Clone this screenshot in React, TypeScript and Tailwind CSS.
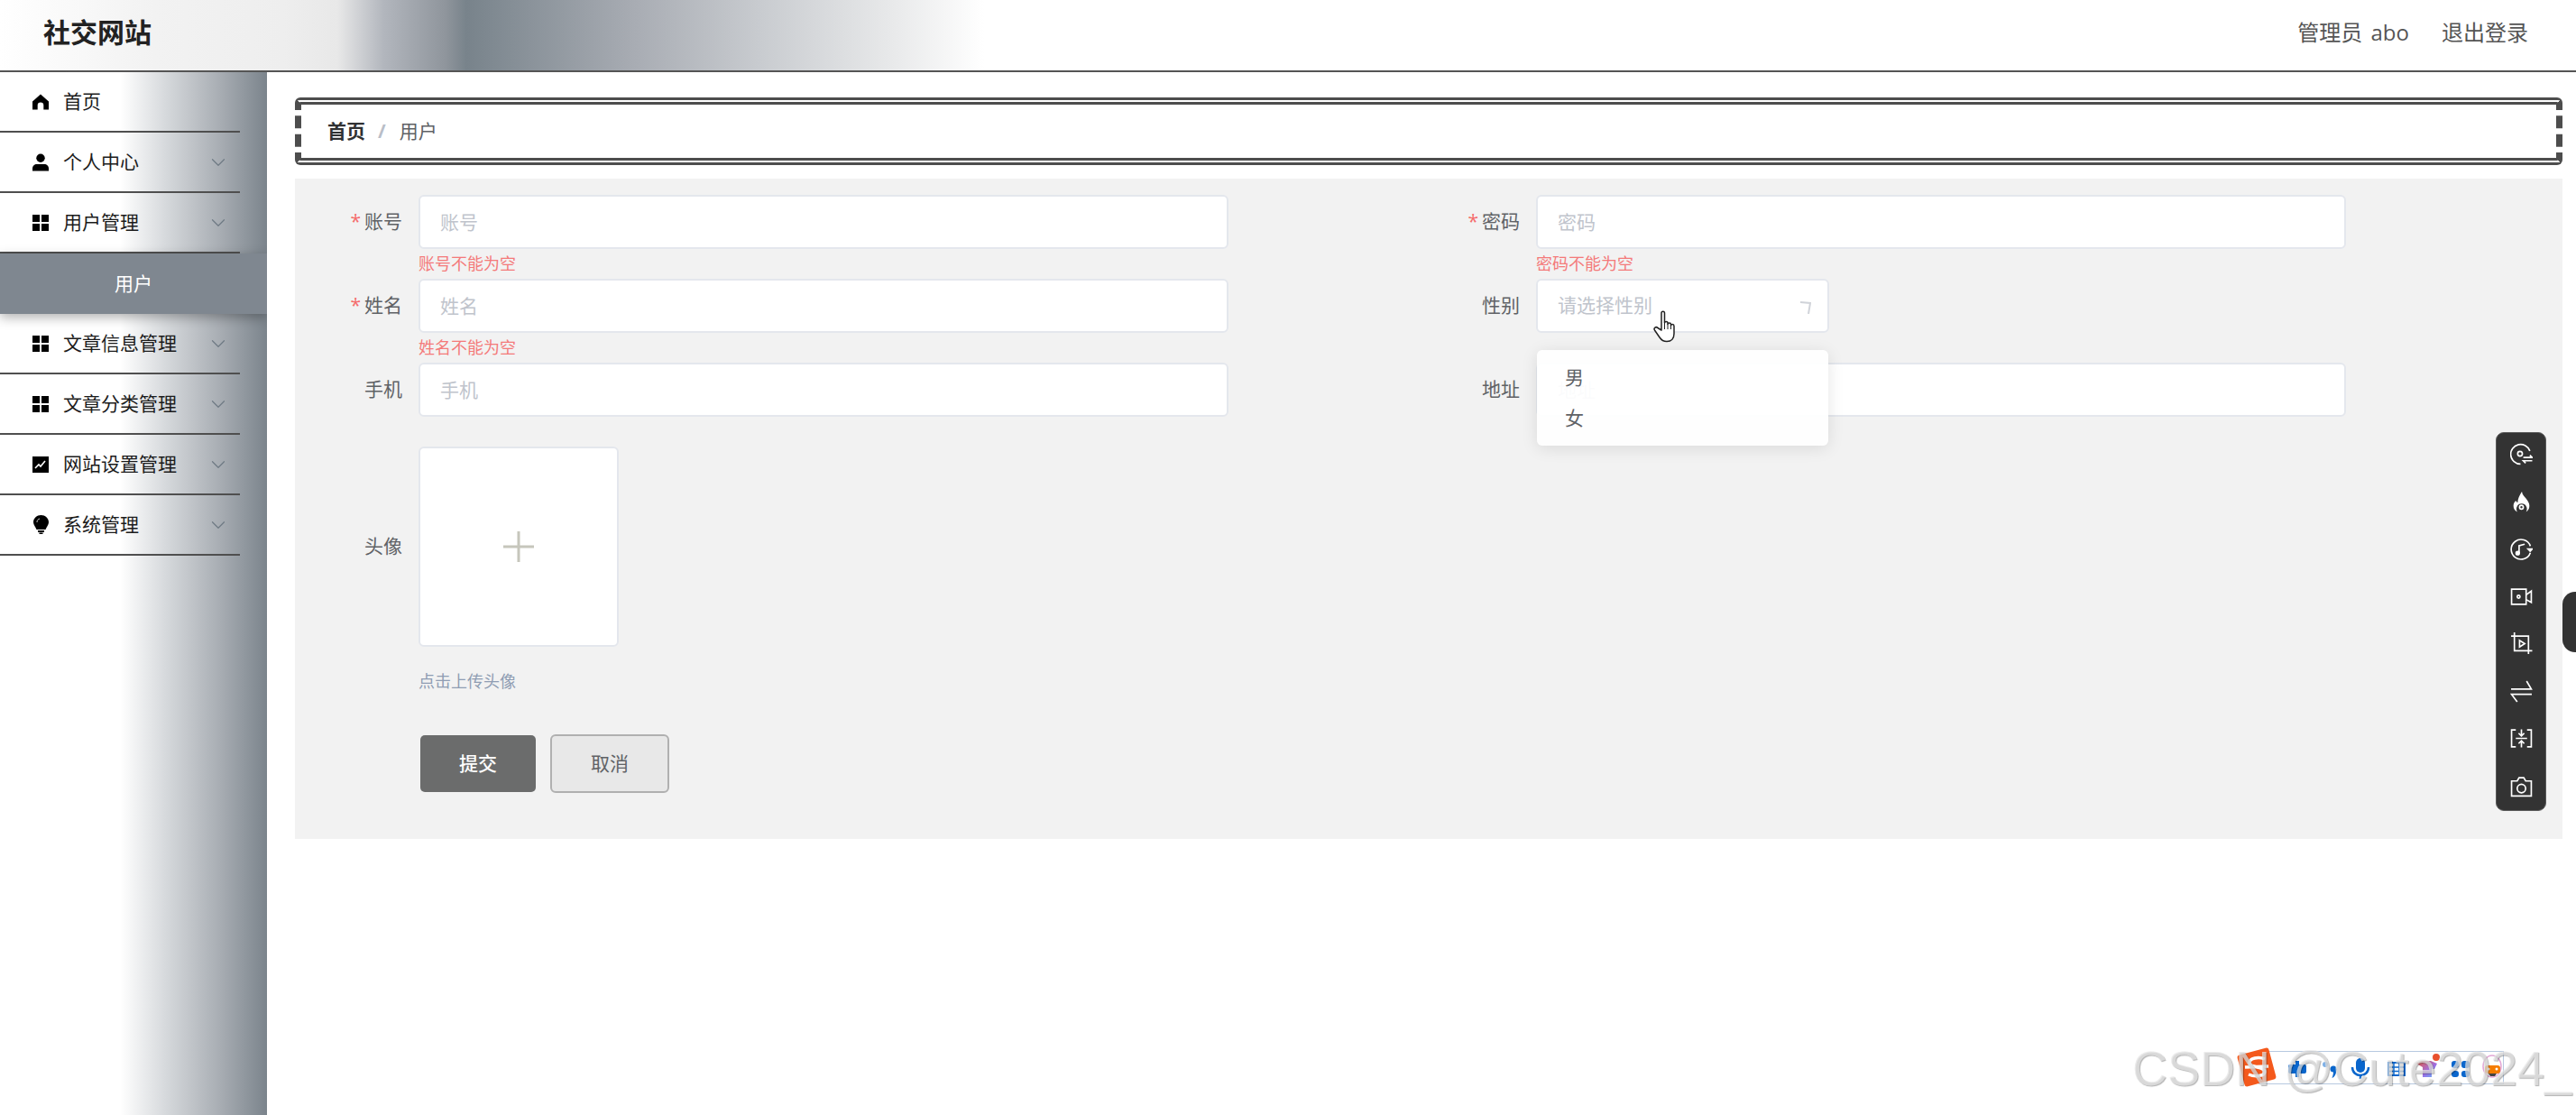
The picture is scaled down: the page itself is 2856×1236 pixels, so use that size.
import { ChevronDown } from 'lucide-react'
import type { ReactNode } from 'react'

function HomeIcon() {
  return (
    <svg viewBox="0 0 19 18" className="w-[19px] h-[18px]" fill="#000">
      <path d="M9.500 0L19 8.500V18h-6v-5a3.500 3.500 0 0 0-7 0v5H0V8.500z" />
    </svg>
  )
}

function PersonIcon() {
  return (
    <svg viewBox="0 0 19 20" className="w-[19px] h-[20px]" fill="#000">
      <circle cx="9.500" cy="5" r="5" />
      <path d="M0 20v-3c0-3 2.500-5 5-5h9c2.500 0 5 2 5 5v3z" />
    </svg>
  )
}

function GridIcon() {
  return (
    <svg viewBox="0 0 18 18" className="w-[18px] h-[18px]" fill="#000">
      <rect x="0" y="0" width="8" height="8" />
      <rect x="10" y="0" width="8" height="8" />
      <rect x="0" y="10" width="8" height="8" />
      <rect x="10" y="10" width="8" height="8" />
    </svg>
  )
}

function ChartIcon() {
  return (
    <svg viewBox="0 0 18 18" className="w-[18px] h-[18px]">
      <rect width="18" height="18" fill="#000" />
      <path d="M3 13l4-4 2 2 5-6" fill="none" stroke="#fff" strokeWidth="1.600" />
    </svg>
  )
}

function BulbIcon() {
  return (
    <svg viewBox="0 0 17 21" className="w-[17px] h-[21px]" fill="#000">
      <path d="M8.500 0C13 0 17 3.500 17 8c0 3-2.500 5-3.500 8h-10C2.500 13 0 11 0 8 0 3.500 4 0 8.500 0z" />
      <rect x="5" y="17" width="7" height="2" />
      <rect x="6.500" y="19.500" width="4" height="1.500" />
      <path d="M4 8c0-2 1-3.500 3-4" fill="none" stroke="#fff" strokeWidth="0.800" />
    </svg>
  )
}

const menus: { label: string; icon: ReactNode; arrow?: boolean; active?: boolean }[] = [
  { label: '首页', icon: <HomeIcon /> },
  { label: '个人中心', icon: <PersonIcon />, arrow: true },
  { label: '用户管理', icon: <GridIcon />, arrow: true },
  { label: '用户', icon: null, active: true },
  { label: '文章信息管理', icon: <GridIcon />, arrow: true },
  { label: '文章分类管理', icon: <GridIcon />, arrow: true },
  { label: '网站设置管理', icon: <ChartIcon />, arrow: true },
  { label: '系统管理', icon: <BulbIcon />, arrow: true },
]

function MenuItem({ label, icon, arrow, active }: (typeof menus)[number]) {
  if (active) {
    return (
      <div className="relative h-[67px] bg-[#7f8790] text-white text-[21px] flex items-center justify-center shadow-[0_4px_12px_rgba(0,0,0,0.3)]">
        {label}
      </div>
    )
  }
  return (
    <div className="h-[67px] w-[266px] border-b-2 border-[#4f4f4f] flex items-center pl-[36px] pr-[11px] text-[21px] text-[#1c1c1c]">
      <span className="w-[18px] flex justify-center">{icon}</span>
      <span className="ml-[16px] flex-1">{label}</span>
      {arrow && <ChevronDown className="w-[26px] h-[26px] text-[#6f7a84]" strokeWidth={1.1} />}
    </div>
  )
}

function Field({
  label,
  required,
  error,
  placeholder,
  narrow,
}: {
  label: string
  required?: boolean
  error?: string
  placeholder: string
  narrow?: boolean
}) {
  return (
    <div className="flex">
      <div className="w-[119px] h-[60px] mr-[18px] flex items-center justify-end text-[21px] text-[#606266]">
        {required && <span className="text-[#f56c6c] mr-[4px]">*</span>}
        {label}
      </div>
      <div>
        {narrow ? (
          <div className="relative w-[325px] h-[60px] bg-white border-2 border-[#e4e7ed] rounded-[6px] pl-[22px] flex items-center text-[21px] text-[#c0c4cc]">
            {placeholder}
            <svg viewBox="0 0 12 14" className="absolute right-[18px] top-[23px] w-[12px] h-[14px]" fill="none" stroke="#d0d3d9" strokeWidth="2">
              <path d="M0 1l11 1-2 12" />
            </svg>
          </div>
        ) : (
          <input
            placeholder={placeholder}
            className="block w-[898px] h-[60px] bg-white border-2 border-[#e4e7ed] rounded-[6px] pl-[22px] text-[21px] outline-none placeholder:text-[#c0c4cc]"
          />
        )}
        <div className="h-[33px] leading-[33px] text-[18px] text-[#f47a7a]">{error}</div>
      </div>
    </div>
  )
}

const toolIcons: ReactNode[] = [
  <>
    <path d="M21 8.500A10.500 10.500 0 1 0 11 22.500" />
    <circle cx="10.500" cy="11.500" r="2.500" />
    <path d="M14 15.500h9.500l-2.500-2.500M23.500 19H14l2.500 2.500" />
  </>,
  <>
    <path
      fill="#fff"
      stroke="none"
      d="M12.500 1c.5 3.500 2.500 5 4.500 7.500 2 2.500 3.500 5 3.500 7.500 0 3-1.500 5-3.500 6.500 1-2 1-4 .5-5a5.500 5.500 0 0 0-10.500 0c-.5 1-.5 3 .5 5C5 21 3.500 19 3.500 16c0-2.500 1-4 2.500-5.500.5 1 1 1.500 2 2C8 9 10 4.500 12.500 1z"
    />
    <circle cx="12" cy="17.500" r="2" />
  </>,
  <>
    <path d="M21.500 9A10.500 10.500 0 1 0 21.500 16" />
    <path d="M9.500 16.500V8.500l6-1.500" />
    <circle cx="8" cy="16.500" r="1.700" fill="#fff" />
    <path d="M19 12h4.500l-2.200 2.400z" fill="#fff" />
  </>,
  <>
    <path d="M1.500 4h15.500v16H1.500z" />
    <path d="M17 10l5.500-4v12L17 15" />
    <circle cx="9" cy="12" r="1.500" />
  </>,
  <>
    <path d="M4.500 0v19.500H23.500" />
    <path d="M1 4h18.500v19" />
    <path d="M10 8.500l5.500 3.500-5.500 3.500z" />
  </>,
  <>
    <path d="M1 9.500h21.500L17.500 1" />
    <path d="M23 15H1.500l6 8" />
  </>,
  <>
    <path d="M6 3H1.500v18H6M18 3h4.500v18H18" />
    <path d="M6 12h12M12 2.500v6.500M9 6.500L12 9.500l3-3M12 21.500V15M9 17.500l3-3 3 3" />
  </>,
  <>
    <path d="M1.500 6.500h6l2-3.500h5l2 3.500h6v16h-21z" />
    <circle cx="12" cy="14.500" r="4.500" />
  </>,
]

function SideToolbar() {
  return (
    <div className="absolute left-[2767px] top-[479px] w-[56px] h-[420px] bg-[#333] border border-[#5a5a5a] rounded-[9px] flex flex-col items-center justify-between pt-[11px] pb-[14px]">
      {toolIcons.map((paths, i) => (
        <svg key={i} viewBox="0 0 24 24" className="w-[25px] h-[25px]" fill="none" stroke="#ffffff" strokeWidth="1.600">
          {paths}
        </svg>
      ))}
    </div>
  )
}

function HandCursor() {
  return (
    <svg viewBox="0 0 26 36" className="absolute left-[1833px] top-[344px] w-[26px] h-[36px]" fill="#fff" stroke="#222" strokeWidth="1.500" strokeLinejoin="round">
      <path d="M9 3c0-2.500 3.500-2.500 3.500 0v11c0-2 3.500-2 3.500 0v1.500c0-2 3.500-2 3.500 0V17c0-2 3.500-2 3.500 .5V26c0 5-3 8.500-8 8.500-4 0-6-1.500-8-4.500l-5.500-8c-1.500-2.500 1.500-4.500 3.500-2.500L9 22z" />
      <path d="M12.500 14v7M16 15.500V21M19.500 17v4" fill="none" strokeWidth="1" />
    </svg>
  )
}

function ImeBar() {
  return (
    <div className="absolute left-[2490px] top-[1159px] w-[286px] h-[44px]">
      <div className="absolute left-[14px] top-[6px] right-0 bottom-[1px] border border-[#b7c9e0]" />
      <svg viewBox="0 0 286 44" className="absolute left-0 top-0 w-[286px] h-[44px]" fill="#0a66cc">
        <rect x="47" y="21" width="20" height="10" rx="2" />
        <rect x="55" y="17" width="4" height="18" />
        <circle cx="88" cy="21" r="3" fill="#7fb0e6" />
        <circle cx="97" cy="26" r="3.500" />
        <path d="M97 26h3.500c0 5-2 9-5 10 1-3 1.500-5 1.500-7z" />
        <rect x="122" y="14" width="10" height="16" rx="5" />
        <path d="M118 24c0 12 18 12 18 0M127 33v4" fill="none" stroke="#0a66cc" strokeWidth="2.500" />
        <path d="M158 19h18v14h-18z" fill="none" stroke="#0a66cc" strokeWidth="2" />
        <path d="M158 24h18M158 28.500h18M164 19v14M170 19v14" stroke="#0a66cc" strokeWidth="1.500" />
        <path d="M189 20l6-3h10l7 3-3 6h-3v9h-10V24z" fill="url(#shirt)" />
        <defs>
          <linearGradient id="shirt" x1="0" y1="0" x2="1" y2="1">
            <stop offset="0" stopColor="#ee5a3a" />
            <stop offset="0.6" stopColor="#9b6fe8" />
            <stop offset="1" stopColor="#63b8f5" />
          </linearGradient>
        </defs>
        <circle cx="211" cy="13" r="4" fill="#e8502e" />
        <rect x="228" y="17" width="8" height="8" rx="3" />
        <rect x="239" y="17" width="9" height="8" rx="3" />
        <rect x="228" y="28" width="8" height="7" rx="3" />
        <rect x="239" y="28" width="9" height="7" rx="3" />
        <ellipse cx="273" cy="23" rx="10" ry="12" fill="#fff" stroke="#e3a6d6" strokeWidth="1.500" />
        <rect x="265" y="22" width="17" height="9" rx="3" fill="#f57c00" />
        <circle cx="269" cy="26" r="1.500" fill="#fff" />
        <circle cx="278" cy="26" r="1.500" fill="#fff" />
        <path d="M269 31h9l-2 3h-5z" fill="#444" />
      </svg>
      <svg viewBox="0 0 46 48" className="absolute left-[-11px] top-0 w-[46px] h-[48px]">
        <rect x="5" y="6" width="36" height="36" rx="3" fill="#f4591c" transform="rotate(-15 23 24)" />
        <path d="M32 15c-7-3-17-1-17 4 0 6 17 4 17 10 0 5-11 6-18 3M10 24l26-1" fill="none" stroke="#fff" strokeWidth="3.500" />
      </svg>
    </div>
  )
}

export default function App() {
  return (
    <div className="relative w-[2856px] h-[1236px] overflow-hidden bg-white font-['Open_Sans','Noto_Sans_CJK_SC',sans-serif]">
      <header className="h-[80px] border-b-2 border-[#555] flex items-center justify-between pl-[48px] pr-[53px] pb-[7px] bg-[linear-gradient(90deg,#fff_0%,#f2f2f2_6%,#eeeeee_11%,#e8e8e8_13.100%,#b2b6bd_14.900%,#8f959c_17.300%,#78838b_18.100%,#a8acb3_24.600%,#c9ccd0_29.600%,#e8e9ea_34.600%,#ffffff_38.200%)]">
        <div className="text-[30px] font-bold text-[#222]">社交网站</div>
        <div className="flex gap-[36px] text-[24px] text-[#555]">
          <span className="[word-spacing:3px]">管理员 abo</span>
          <span>退出登录</span>
        </div>
      </header>
      <div className="flex h-[1156px]">
        <aside className="w-[296px] shrink-0 overflow-hidden bg-[linear-gradient(90deg,#fff_45%,#d6d9dc_62%,#a9aeb4_82%,#7b848c_100%)]">
          {menus.map((m) => (
            <MenuItem key={m.label} {...m} />
          ))}
        </aside>
        <main className="flex-1 pt-[28px] pl-[31px] pr-[15px]">
          <div className="h-[75px] bg-white border-[#4d4d4d] rounded-[6px] [border-width:8px_7px] [border-style:double_dashed] flex items-center pl-[29px] text-[21px] gap-[14px]">
            <span className="font-bold text-[#303133]">首页</span>
            <span className="text-[#b9bec8] font-bold">/</span>
            <span className="text-[#606266] ml-[1px]">用户</span>
          </div>
          <div className="mt-[15px] h-[732px] bg-[#f2f2f2] pt-[18px]">
            <div className="grid grid-cols-[1239px_1fr]">
              <Field label="账号" required placeholder="账号" error="账号不能为空" />
              <Field label="密码" required placeholder="密码" error="密码不能为空" />
              <Field label="姓名" required placeholder="姓名" error="姓名不能为空" />
              <Field label="性别" placeholder="请选择性别" narrow />
              <Field label="手机" placeholder="手机" />
              <Field label="地址" placeholder="地址" />
            </div>
            <div className="flex">
              <div className="w-[119px] h-[222px] mr-[18px] flex items-center justify-end text-[21px] text-[#606266]">头像</div>
              <div>
                <div className="w-[222px] h-[222px] bg-white border-2 border-[#e4e7ed] rounded-[6px] flex items-center justify-center">
                  <svg viewBox="0 0 34 34" className="w-[34px] h-[34px]" stroke="#c6c6bc" strokeWidth="3">
                    <path d="M17 0v34M0 17h34" />
                  </svg>
                </div>
                <div className="mt-[26px] text-[18px] leading-[24px] text-[#8f9db3]">点击上传头像</div>
              </div>
            </div>
            <div className="flex items-center pl-[139px] mt-[47px] gap-[16px]">
              <button className="w-[128px] h-[63px] rounded-[5px] bg-[#6b6c6c] text-white text-[21px] font-medium">提交</button>
              <button className="w-[132px] h-[65px] rounded-[6px] bg-[#e8e8e8] border-2 border-[#b0b0b0] text-[#606266] text-[21px]">取消</button>
            </div>
          </div>
        </main>
      </div>

      {/* dropdown of the gender select */}
      <div className="absolute left-[1704px] top-[388px] w-[323px] h-[106px] bg-[rgba(255,255,255,0.93)] rounded-[6px] shadow-[0_3px_18px_rgba(0,0,0,0.1)] pl-[31px] pt-[8px] text-[21px] text-[#606266]">
        <div className="absolute left-[54px] -top-[6px] w-[12px] h-[12px] bg-white rotate-45 -z-10" />
        <div className="h-[45px] leading-[45px]">男</div>
        <div className="h-[45px] leading-[45px]">女</div>
      </div>
      <HandCursor />

      <SideToolbar />
      <div className="absolute left-[2841px] top-[656px] w-[15px] h-[67px] bg-[#333] rounded-l-[14px]" />

      <ImeBar />
      <div className="absolute left-[2364px] top-[1153px] font-['Liberation_Sans',sans-serif] text-[54px] leading-[62px] whitespace-nowrap text-[rgba(232,232,232,0.72)] [text-shadow:1px_1px_1px_rgba(0,0,0,0.3)]">
        CSDN @Cute2024_
      </div>
    </div>
  )
}
